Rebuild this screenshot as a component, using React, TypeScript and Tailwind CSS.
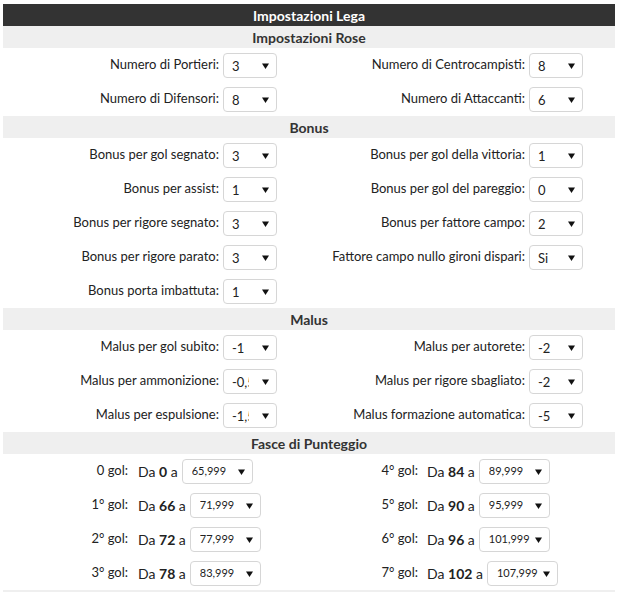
const font = { fontFamily: "Lato, 'Liberation Sans', sans-serif" };

type Row = { label: string; value: string };

function Arrow() {
  return (
    <svg width="7" height="6" viewBox="0 0 7 6" className="shrink-0">
      <polygon points="0,0.5 7,0.5 3.5,6" fill="#111" />
    </svg>
  );
}

function Select({ value }: { value: string }) {
  return (
    <div className="flex h-[25px] w-[54px] items-center justify-between rounded-[4px] border border-[#d6d6d6] bg-white pl-[8px] pr-[7px]">
      <span className="block w-[17px] overflow-hidden whitespace-nowrap pt-[2px] text-[13px] text-[#222]">
        {value}
      </span>
      <Arrow />
    </div>
  );
}

function SmallSelect({ value }: { value: string }) {
  return (
    <div className="flex h-[25px] w-[71px] items-center justify-between rounded-[4px] border border-[#d6d6d6] bg-white pl-[9px] pr-[7px]">
      <span className="block max-w-[41px] overflow-hidden whitespace-nowrap text-[11px] text-[#222]">
        {value}
      </span>
      <Arrow />
    </div>
  );
}

function SectionHeader({ title }: { title: string }) {
  return (
    <div className="flex h-[22px] items-center justify-center bg-[#efefef] text-[14px] font-bold text-[#333]">
      {title}
    </div>
  );
}

function Field({ row }: { row?: Row }) {
  if (!row) {
    return (
      <>
        <div />
        <div />
      </>
    );
  }
  return (
    <>
      <div className="flex h-[34px] items-center justify-end pr-[2px] text-[13px] text-[#222]">
        {row.label}
      </div>
      <div className="flex h-[34px] items-center pl-[2px] pt-[1px]">
        <Select value={row.value} />
      </div>
    </>
  );
}

function Section({ title, rows }: { title: string; rows: [Row, Row | undefined][] }) {
  return (
    <div>
      <SectionHeader title={title} />
      <div className="grid grid-cols-[218px_88px_218px_88px]">
        {rows.map(([l, r], i) => (
          <div key={i} className="contents">
            <Field row={l} />
            <Field row={r} />
          </div>
        ))}
      </div>
    </div>
  );
}

const rose: [Row, Row | undefined][] = [
  [{ label: "Numero di Portieri:", value: "3" }, { label: "Numero di Centrocampisti:", value: "8" }],
  [{ label: "Numero di Difensori:", value: "8" }, { label: "Numero di Attaccanti:", value: "6" }],
];

const bonus: [Row, Row | undefined][] = [
  [{ label: "Bonus per gol segnato:", value: "3" }, { label: "Bonus per gol della vittoria:", value: "1" }],
  [{ label: "Bonus per assist:", value: "1" }, { label: "Bonus per gol del pareggio:", value: "0" }],
  [{ label: "Bonus per rigore segnato:", value: "3" }, { label: "Bonus per fattore campo:", value: "2" }],
  [{ label: "Bonus per rigore parato:", value: "3" }, { label: "Fattore campo nullo gironi dispari:", value: "Si" }],
  [{ label: "Bonus porta imbattuta:", value: "1" }, undefined],
];

const malus: [Row, Row | undefined][] = [
  [{ label: "Malus per gol subito:", value: "-1" }, { label: "Malus per autorete:", value: "-2" }],
  [{ label: "Malus per ammonizione:", value: "-0,5" }, { label: "Malus per rigore sbagliato:", value: "-2" }],
  [{ label: "Malus per espulsione:", value: "-1,5" }, { label: "Malus formazione automatica:", value: "-5" }],
];

type Band = { label: string; from: string; to: string };

const fasce: [Band, Band][] = [
  [{ label: "0 gol:", from: "0", to: "65,999" }, { label: "4° gol:", from: "84", to: "89,999" }],
  [{ label: "1° gol:", from: "66", to: "71,999" }, { label: "5° gol:", from: "90", to: "95,999" }],
  [{ label: "2° gol:", from: "72", to: "77,999" }, { label: "6° gol:", from: "96", to: "101,999" }],
  [{ label: "3° gol:", from: "78", to: "83,999" }, { label: "7° gol:", from: "102", to: "107,999" }],
];

function BandCells({ band, left }: { band: Band; left: boolean }) {
  return (
    <>
      <div
        className={`flex h-[34px] items-center justify-end text-[13px] text-[#222] ${left ? "pr-[3px]" : "pr-[5px]"}`}
      >
        {band.label}
      </div>
      <div className={`flex h-[34px] items-center ${left ? "pl-[7px]" : "pl-[4px]"}`}>
        <span className="text-[14px] text-[#222]">
          Da <b>{band.from}</b> a
        </span>
        <div className="ml-[4px] pt-[1px]">
          <SmallSelect value={band.to} />
        </div>
      </div>
    </>
  );
}

export default function App() {
  return (
    <div className="min-h-screen bg-white pt-[4px]" style={font}>
      <div className="ml-[3px] w-[612px]">
        <div className="flex h-[22px] items-center justify-center bg-[#333333] text-[14px] font-bold text-white">
          Impostazioni Lega
        </div>
        <Section title="Impostazioni Rose" rows={rose} />
        <Section title="Bonus" rows={bonus} />
        <Section title="Malus" rows={malus} />
        <div>
          <SectionHeader title="Fasce di Punteggio" />
          <div className="grid grid-cols-[128px_180px_112px_192px]">
            {fasce.map(([l, r], i) => (
              <div key={i} className="contents">
                <BandCells band={l} left />
                <BandCells band={r} left={false} />
              </div>
            ))}
          </div>
        </div>
        <div className="h-[22px] bg-[#efefef]" />
      </div>
    </div>
  );
}
